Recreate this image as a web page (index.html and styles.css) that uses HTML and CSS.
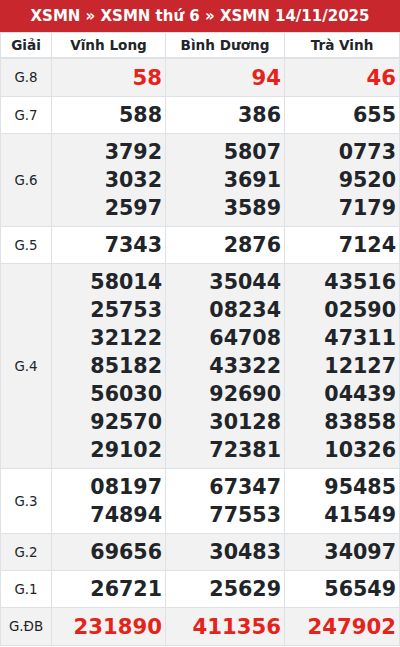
FILE: index.html
```html
<!DOCTYPE html>
<html lang="vi">
<head>
<meta charset="utf-8">
<title>XSMN 14/11/2025</title>
<link rel="stylesheet" href="styles.css">
</head>
<body>
<div class="box">
  <h2 class="title">XSMN » XSMN thứ 6 » XSMN 14/11/2025</h2>
  <table class="kq">
    <colgroup>
      <col class="c-giai">
      <col class="c1">
      <col class="c2">
      <col class="c3">
    </colgroup>
    <thead>
      <tr><th>Giải</th><th>Vĩnh Long</th><th>Bình Dương</th><th>Trà Vinh</th></tr>
    </thead>
    <tbody>
      <tr class="odd"><td class="g">G.8</td><td class="n red">58</td><td class="n red">94</td><td class="n red">46</td></tr>
      <tr><td class="g">G.7</td><td class="n">588</td><td class="n">386</td><td class="n">655</td></tr>
      <tr class="odd"><td class="g">G.6</td><td class="n">3792<br>3032<br>2597</td><td class="n">5807<br>3691<br>3589</td><td class="n">0773<br>9520<br>7179</td></tr>
      <tr><td class="g">G.5</td><td class="n">7343</td><td class="n">2876</td><td class="n">7124</td></tr>
      <tr class="odd"><td class="g">G.4</td><td class="n">58014<br>25753<br>32122<br>85182<br>56030<br>92570<br>29102</td><td class="n">35044<br>08234<br>64708<br>43322<br>92690<br>30128<br>72381</td><td class="n">43516<br>02590<br>47311<br>12127<br>04439<br>83858<br>10326</td></tr>
      <tr><td class="g">G.3</td><td class="n">08197<br>74894</td><td class="n">67347<br>77553</td><td class="n">95485<br>41549</td></tr>
      <tr class="odd"><td class="g">G.2</td><td class="n">69656</td><td class="n">30483</td><td class="n">34097</td></tr>
      <tr><td class="g">G.1</td><td class="n">26721</td><td class="n">25629</td><td class="n">56549</td></tr>
      <tr class="odd"><td class="g">G.ĐB</td><td class="n red">231890</td><td class="n red">411356</td><td class="n red">247902</td></tr>
    </tbody>
  </table>
</div>
</body>
</html>
```
FILE: styles.css
```css
html, body {
  margin: 0;
  padding: 0;
  background: #fff;
}
body {
  font-family: "DejaVu Sans", sans-serif;
  color: #212529;
}
.box {
  width: 400px;
}
.title {
  margin: 0;
  background: #c8282d;
  color: #fff;
  font-size: 15px;
  font-weight: bold;
  text-align: center;
  height: 32px;
  line-height: 32px;
  white-space: nowrap;
}
.kq {
  width: 399px;
  border-collapse: collapse;
  table-layout: fixed;
}
.c-giai { width: 51px; }
.c1 { width: 114px; }
.c2 { width: 119px; }
.c3 { width: 115px; }
.kq th, .kq td {
  border: 1px solid #dee2e6;
}
.kq th {
  font-size: 13.6px;
  font-weight: bold;
  text-align: center;
  padding: 2px 2px;
  line-height: 20px;
  border-bottom: 2px solid #dee2e6;
}
.kq tr.odd td {
  background: #f2f2f2;
}
.kq td {
  padding: 4px 3px 4px 4px;
  vertical-align: middle;
}
.g {
  font-size: 13.4px;
  text-align: center;
  padding-left: 2px !important;
  padding-right: 2px !important;
}
.n {
  font-size: 20.6px;
  font-weight: bold;
  line-height: 28px;
  text-align: right;
}
.red {
  color: #e5231b;
  font-size: 21.2px;
  line-height: 29px;
}
```
